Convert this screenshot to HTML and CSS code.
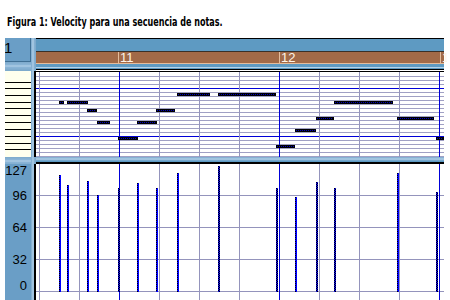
FILE: index.html
```html
<!DOCTYPE html>
<html lang="es">
<head>
    <meta charset="UTF-8">
    <title>Velocity</title>
    <link rel="stylesheet" href="styles.css">
</head>
<body>
    <p class="caption"><span>Figura 1: Velocity para una secuencia de notas.</span></p>

    <div class="editor">
        <!-- esquina superior izquierda -->
        <div class="corner">1</div>
        <div class="vsplit"></div>

        <!-- regla de compases -->
        <div class="ruler">
            <div class="ruler-top"></div>
            <div class="ruler-bars">
                <span class="bar-lead"></span>
                <span class="bar-cell">11</span>
                <span class="bar-cell">12</span>
                <span class="bar-cell last">1</span>
            </div>
            <div class="ruler-foot"></div>
        </div>
        <div class="hsplit"></div>

        <!-- teclado y piano roll -->
        <div class="keys">
            <svg width="26" height="86">
                <g stroke="#000" stroke-width="1">
                    <line x1="0" y1="11.5" x2="26" y2="11.5"/>
                    <line x1="0" y1="17.5" x2="26" y2="17.5"/>
                    <line x1="0" y1="24.5" x2="26" y2="24.5"/>
                    <line x1="0" y1="31.5" x2="26" y2="31.5"/>
                    <line x1="0" y1="37.5" x2="26" y2="37.5"/>
                    <line x1="0" y1="44.5" x2="26" y2="44.5"/>
                    <line x1="0" y1="51.5" x2="26" y2="51.5"/>
                    <line x1="0" y1="58.5" x2="26" y2="58.5"/>
                    <line x1="0" y1="65.5" x2="26" y2="65.5"/>
                    <line x1="0" y1="72.5" x2="26" y2="72.5"/>
                    <line x1="0" y1="78.5" x2="26" y2="78.5"/>
                </g>
            </svg>
        </div>
        <div class="roll">
            <svg id="roll" width="408" height="86"></svg>
        </div>

        <div class="hsplit low"></div>
        <div class="rsplit"></div>

        <!-- escala de velocity -->
        <div class="scale">
            <span class="v127">127</span>
            <span class="v96">96</span>
            <span class="v64">64</span>
            <span class="v32">32</span>
            <span class="v0">0</span>
        </div>
        <div class="velo">
            <svg id="velo" width="408" height="136"></svg>
        </div>
    </div>

    <script>
        // notas: inicio, largo, fila (y de la página), velocity (y superior de la barra), oscura
        const notes = [
            [59, 5, 100, 175, 0],
            [67, 21, 100, 185, 0],
            [87, 10, 108, 181, 0],
            [97, 13, 120, 195, 0],
            [118, 20, 136, 188, 1],
            [137, 20, 120, 183, 0],
            [156, 19, 108, 188, 0],
            [177, 33, 92, 173, 0],
            [218, 58, 92, 166, 1],
            [276, 19, 144, 188, 1],
            [295, 21, 128, 197, 0],
            [316, 18, 116, 182, 1],
            [334, 59, 100, 188, 1],
            [397, 37, 116, 173, 0],
            [436, 8, 136, 192, 1]
        ];

        const NS = "http://www.w3.org/2000/svg";
        const OX = 36;

        function el(svg, name, attrs) {
            const e = document.createElementNS(NS, name);
            for (const k in attrs) e.setAttribute(k, attrs[k]);
            svg.appendChild(e);
            return e;
        }

        function vlines(svg, h) {
            for (let x = 39; x < 444; x += 40) {
                const blue = (x - 119) % 160 === 0;
                el(svg, "line", {
                    x1: x - OX + 0.5, y1: 0, x2: x - OX + 0.5, y2: h,
                    stroke: blue ? "#0000d8" : "#9494bc"
                });
            }
        }

        // piano roll
        const roll = document.getElementById("roll");
        for (let y = 75; y < 157; y += 4) {
            const blue = (y - 87) % 48 === 0;
            el(roll, "line", {
                x1: 0, y1: y - 71 + 0.5, x2: 408, y2: y - 71 + 0.5,
                stroke: blue ? "#0000d8" : "#a0a0c4"
            });
        }
        vlines(roll, 86);
        notes.forEach(n => {
            const x = n[0] - OX, y = n[2] - 71;
            el(roll, "rect", { x: x, y: y, width: n[1], height: 3, fill: "#000" });
            el(roll, "line", {
                x1: x + 1, y1: y + 1.5, x2: x + n[1] - 1, y2: y + 1.5,
                stroke: "#0000c0", "stroke-dasharray": "1 1"
            });
        });

        // velocity
        const velo = document.getElementById("velo");
        [195, 227, 259, 291].forEach(y => {
            el(velo, "line", {
                x1: 0, y1: y - 164 + 0.5, x2: 408, y2: y - 164 + 0.5,
                stroke: "#9494bc"
            });
        });
        vlines(velo, 136);
        notes.forEach(n => {
            const x = n[0] - OX, top = n[3] - 164, h = 292 - n[3];
            el(velo, "rect", { x: x, y: top, width: 2, height: h, fill: "#0000ff" });
            el(velo, "line", {
                x1: x + 0.5, y1: top, x2: x + 0.5, y2: top + h,
                stroke: "#000", "stroke-dasharray": "1 1"
            });
            if (n[4]) {
                el(velo, "line", {
                    x1: x + 1.5, y1: top + 1, x2: x + 1.5, y2: top + h,
                    stroke: "#000", "stroke-dasharray": "1 1"
                });
            }
        });
    </script>
</body>
</html>
```

FILE: styles.css
```css
body {
    margin: 0;
    background: #fff;
    font-family: "Liberation Sans", Arial, sans-serif;
    width: 450px;
    height: 300px;
    overflow: hidden;
}

.caption {
    margin: 0;
    padding: 15px 0 0 7px;
    height: 23px;
    font-family: "DejaVu Sans Condensed", "Liberation Sans", sans-serif;
    font-weight: bold;
    font-size: 12px;
    line-height: 14px;
    color: #000;
}

.caption span {
    display: inline-block;
    white-space: nowrap;
    transform: scaleX(0.745);
    transform-origin: 0 0;
}

.editor {
    margin-left: 5px;
    display: grid;
    grid-template-columns: 26px 5px 408px;
    grid-template-rows: 24px 9px 86px 7px 136px;
}

/* columna izquierda */
.corner {
    grid-column: 1;
    grid-row: 1;
    background: #6a9ec6;
    border-right: 1px solid #3f6f94;
    border-bottom: 1px solid #3f6f94;
    color: #000;
    font-size: 15px;
    line-height: 15px;
    padding-top: 2px;
    text-indent: -1px;
    overflow: hidden;
}

.vsplit {
    grid-column: 2;
    grid-row: 1 / 6;
    background: linear-gradient(90deg, #7eaacc 0, #8cb6d8 1px, #b6d2e8 2px, #8cb6d8 3px, #7eaacc 4px);
}

.hsplit {
    grid-column: 1;
    grid-row: 2;
    background: linear-gradient(180deg, #7eaacc 0, #8cb6d8 3px, #b6d2e8 4px, #8cb6d8 5px, #7eaacc 8px);
}

.hsplit.low {
    grid-row: 4;
}

.keys {
    grid-column: 1;
    grid-row: 3;
    background: #ffffee;
}

.keys svg,
.roll svg,
.velo svg {
    display: block;
}

/* regla */
.ruler {
    grid-column: 3;
    grid-row: 1 / 3;
    display: flex;
    flex-direction: column;
}

.ruler-top {
    height: 12px;
    border-top: 1px solid #000;
    border-bottom: 1px solid #3a3028;
    background: #5e9ac2;
}

.ruler-bars {
    height: 11px;
    display: flex;
    background: #a26a48;
    border-bottom: 1px solid #e4bc9c;
}

.bar-lead {
    flex: none;
    width: 82px;
}

.bar-cell {
    flex: none;
    width: 159px;
    border-left: 1px solid #e4bc9c;
    padding-left: 1px;
    color: #fff4e8;
    font-size: 13px;
    line-height: 11px;
    height: 11px;
}

.bar-cell.last {
    width: 5px;
    overflow: hidden;
}

.ruler-foot {
    height: 5px;
    background: linear-gradient(180deg, #5e9ac2 0, #5e9ac2 3px, #b6d2e8 3px, #b6d2e8 4px, #5e9ac2 4px);
    border-bottom: 1px solid #000;
}

/* piano roll */
.roll {
    grid-column: 3;
    grid-row: 3;
    background: #fff;
    border-left: 2px solid #000;
    border-top: 1px solid #000;
    margin-left: -2px;
}

.rsplit {
    grid-column: 3;
    grid-row: 4;
    background: linear-gradient(180deg, #7eaacc 0, #8cb6d8 1px, #b6d2e8 2px, #8cb6d8 3px, #5e9ac2 4px, #5e9ac2 5px, #000 5px);
}

/* escala y velocity */
.scale {
    grid-column: 1;
    grid-row: 5;
    background: #6a9ec6;
    position: relative;
    font-size: 13px;
    color: #000;
}

.scale span {
    position: absolute;
    right: 4px;
    line-height: 13px;
}

.v127 { top: 0; }
.v96 { top: 25px; }
.v64 { top: 57px; }
.v32 { top: 89px; }
.v0 { top: 115px; }

.velo {
    grid-column: 3;
    grid-row: 5;
    background: #fff;
    border-left: 2px solid #000;
    margin-left: -2px;
}
```
